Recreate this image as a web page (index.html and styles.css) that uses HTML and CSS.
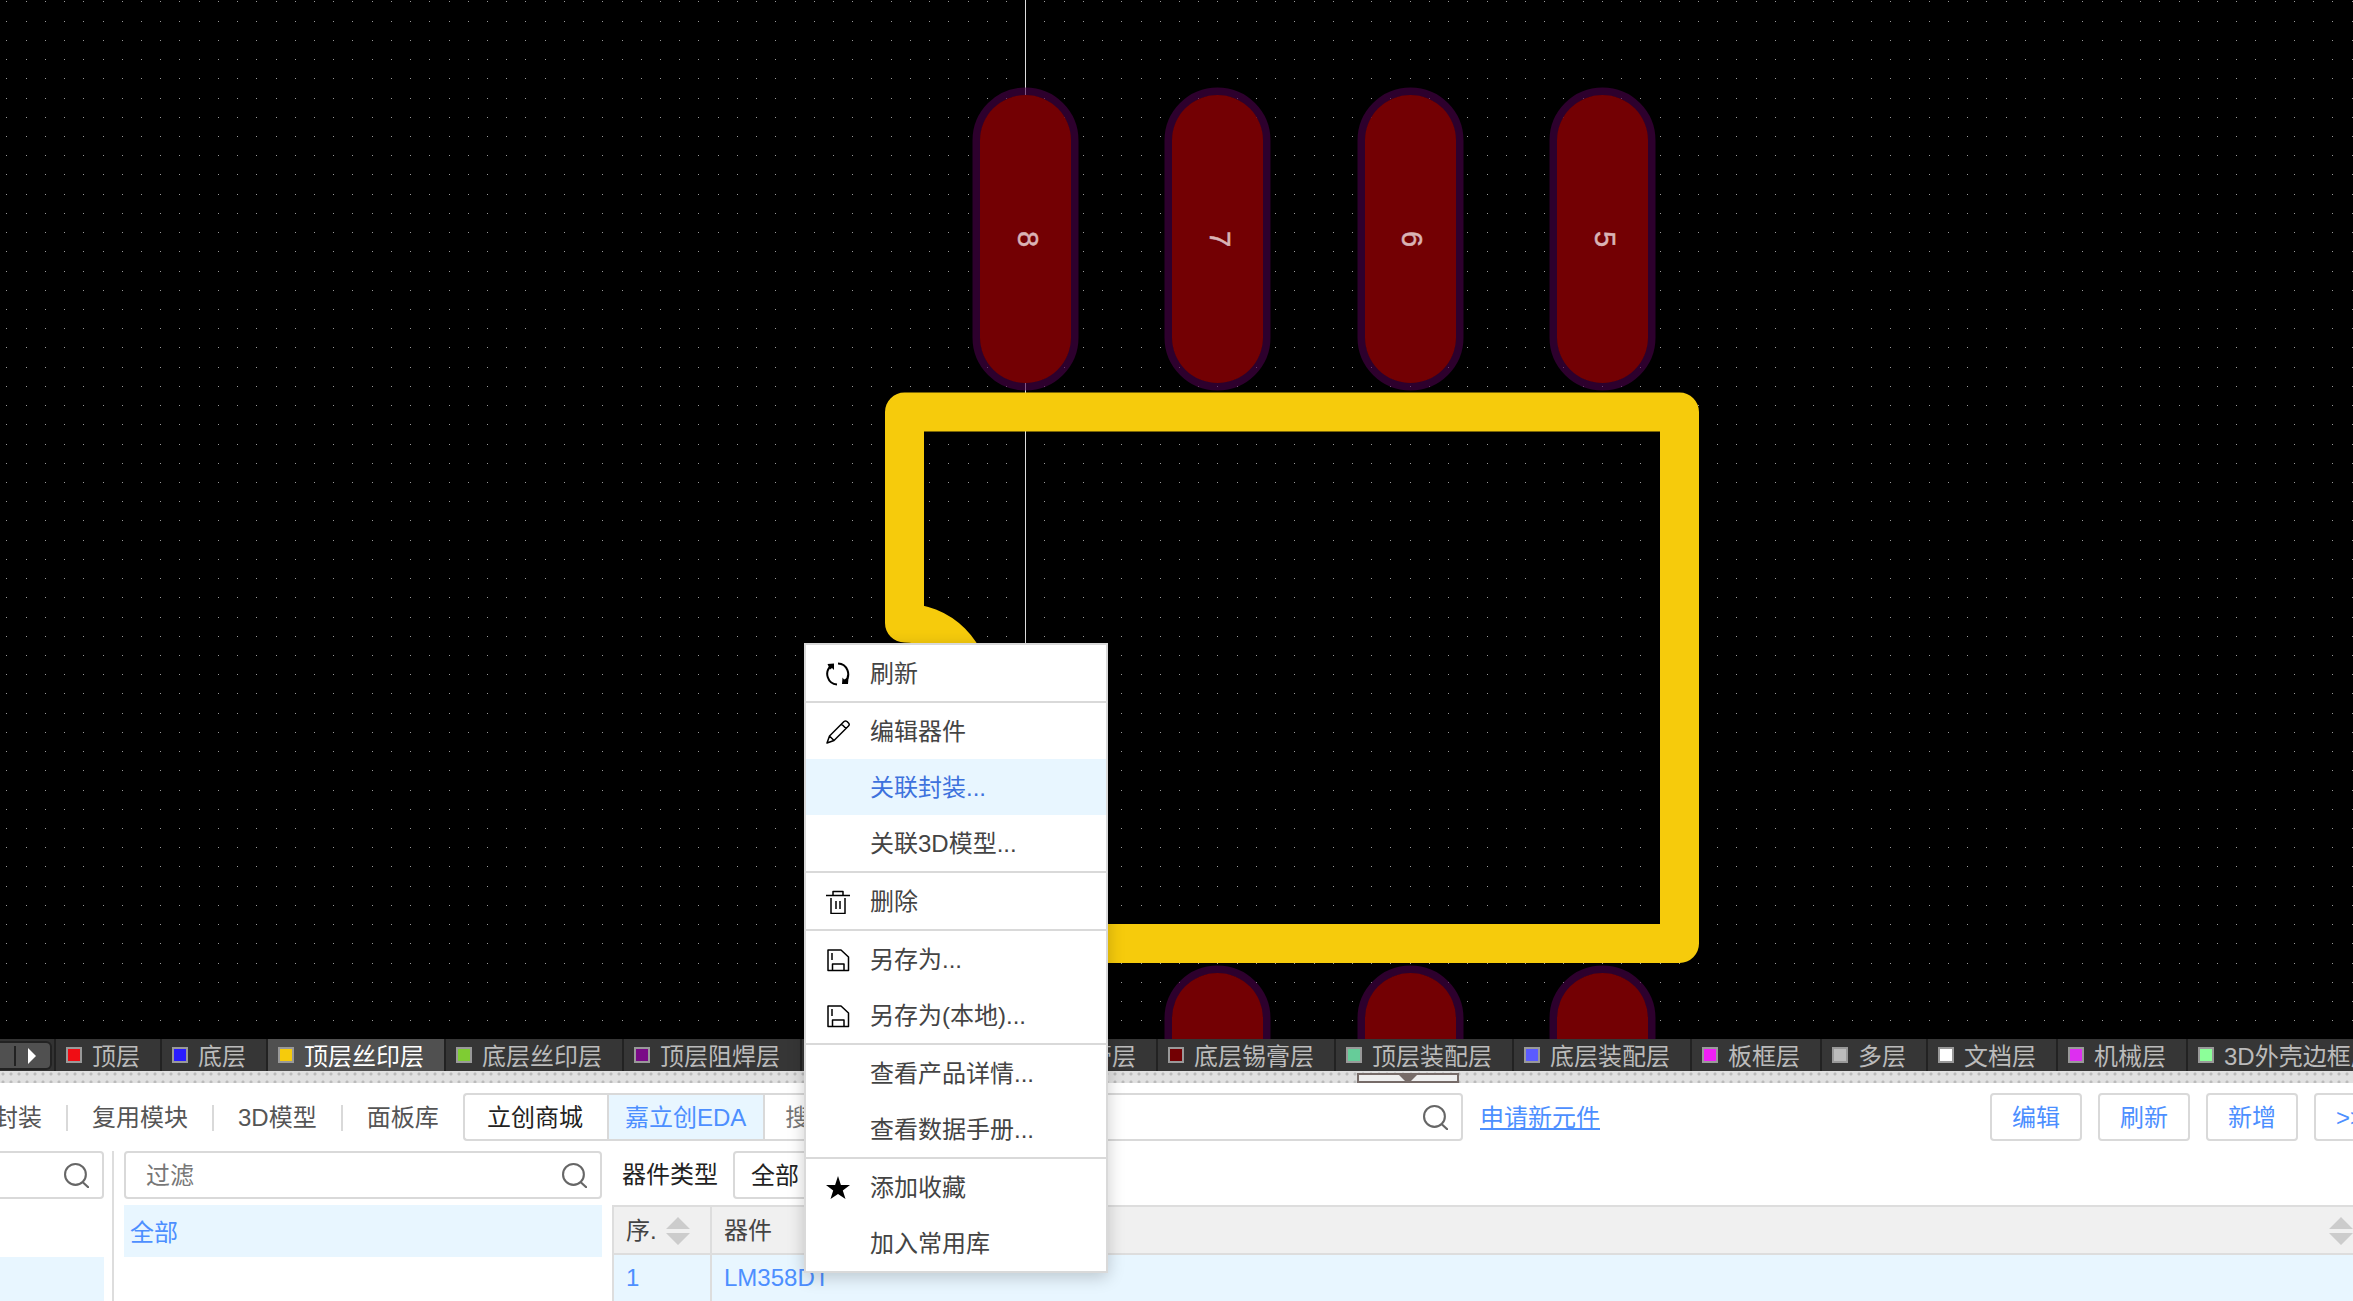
FILE: index.html
```html
<!DOCTYPE html>
<html lang="zh-CN">
<head>
<meta charset="utf-8">
<title>立创EDA</title>
<link rel="stylesheet" href="styles.css">
</head>
<body>
<svg class="defs" aria-hidden="true">
  <symbol id="search" viewBox="0 0 24 24"><circle cx="11" cy="11" r="10"/><path d="M17.500 18L24 24"/></symbol>
  <symbol id="save" viewBox="0 0 24 24"><path d="M2 2h13l7.500 7v13.500H2zM6.500 22v-6h11.500v6M6 5v7"/></symbol>
</svg>
<main class="app">
  <section class="canvas">
    <svg class="board" width="100%" height="100%">
      <defs>
        <pattern id="grid" x="6" y="1" width="173" height="173" patternUnits="userSpaceOnUse">
          <path id="dots" class="dots" d="M0 .5H173"/>
          <use href="#dots" y="20"/><use href="#dots" y="39"/><use href="#dots" y="58"/><use href="#dots" y="77"/>
          <use href="#dots" y="97"/><use href="#dots" y="116"/><use href="#dots" y="135"/><use href="#dots" y="154"/>
        </pattern>
        <g id="pad">
          <rect class="mask" x="-48.500" y="3.500" width="98" height="295" rx="49"/>
          <rect class="copper" x="-45" y="7" width="91" height="288" rx="45.500"/>
        </g>
      </defs>
      <rect width="100%" height="100%" fill="url(#grid)"/>
      <path class="axis" d="M1025.500 0V1040"/>
      <use href="#pad" x="1025" y="88"/><use href="#pad" x="1217" y="88"/><use href="#pad" x="1410" y="88"/><use href="#pad" x="1602" y="88"/>
      <use href="#pad" x="1025" y="966"/><use href="#pad" x="1217" y="966"/><use href="#pad" x="1410" y="966"/><use href="#pad" x="1602" y="966"/>
      <text class="pin" transform="translate(1018 239) rotate(90)">8</text>
      <text class="pin" transform="translate(1210 239) rotate(90)">7</text>
      <text class="pin" transform="translate(1402 239) rotate(90)">6</text>
      <text class="pin" transform="translate(1595 239) rotate(90)">5</text>
      <path class="silk" d="M904.500 755V943.500H1679.500V412H904.500V623A66 66 0 0 1 904.500 755"/>
    </svg>
  </section>

  <nav class="layers">
    <span class="scroller"><button class="prev" aria-label="上一个"></button><button class="next" aria-label="下一个"><svg width="8" height="16"><path d="M0 0L8 8L0 16z"/></svg></button></span>
    <button class="layer"><i class="sw red"></i>顶层</button>
    <button class="layer"><i class="sw blue"></i>底层</button>
    <button class="layer active"><i class="sw yellow"></i>顶层丝印层</button>
    <button class="layer"><i class="sw green"></i>底层丝印层</button>
    <button class="layer"><i class="sw purple"></i>顶层阻焊层</button>
    <button class="layer"><i class="sw violet"></i>底层阻焊层</button>
    <button class="layer"><i class="sw gray"></i>顶层锡膏层</button>
    <button class="layer"><i class="sw maroon"></i>底层锡膏层</button>
    <button class="layer"><i class="sw mint"></i>顶层装配层</button>
    <button class="layer"><i class="sw indigo"></i>底层装配层</button>
    <button class="layer"><i class="sw magenta"></i>板框层</button>
    <button class="layer"><i class="sw silver"></i>多层</button>
    <button class="layer"><i class="sw white"></i>文档层</button>
    <button class="layer"><i class="sw orchid"></i>机械层</button>
    <button class="layer"><i class="sw lime"></i>3D外壳边框层</button>
  </nav>
  <div class="splitter"><button class="collapse" aria-label="收起"><svg width="18" height="9"><path d="M0 0H18L9 9z"/></svg></button></div>

  <section class="library">
    <div class="toolbar">
      <div class="kinds">
        <button class="kind first">封装</button><button class="kind">复用模块</button><button class="kind">3D模型</button><button class="kind">面板库</button>
      </div>
      <div class="searchbar">
        <button class="source">立创商城</button><button class="source chosen">嘉立创EDA</button>
        <label class="field query"><input aria-label="搜索" placeholder="搜索"><svg class="glass"><use href="#search"/></svg></label>
      </div>
      <a class="request" href="#new">申请新元件</a>
      <div class="actions"><button>编辑</button><button>刷新</button><button>新增</button><button class="more">&gt;&gt;</button></div>
    </div>
    <div class="panes">
      <div class="pane tree">
        <label class="field"><input aria-label="分类过滤"><svg class="glass"><use href="#search"/></svg></label>
        <div class="gap"></div><div class="picked"></div>
      </div>
      <div class="pane filter">
        <label class="field"><input aria-label="过滤" placeholder="过滤"><svg class="glass"><use href="#search"/></svg></label>
        <div class="picked">全部</div>
      </div>
      <div class="results">
        <div class="typebar"><label for="type">器件类型</label><select id="type"><option>全部</option></select></div>
        <table>
          <thead><tr><th class="num"><span class="head">序.<svg class="sort" width="24" height="28"><path d="M12 0L24 12H0zM0 16H24L12 28z"/></svg></span></th><th><span class="head">器件<svg class="sort last" width="24" height="28"><path d="M12 0L24 12H0zM0 16H24L12 28z"/></svg></span></th></tr></thead>
          <tbody><tr><td>1</td><td>LM358DT</td></tr></tbody>
        </table>
      </div>
    </div>
  </section>
</main>

<div class="menu" role="menu">
  <button><svg class="icon" viewBox="0 0 24 24"><path class="bold" d="M11 22.500A10.500 10.500 0 0 1 5 4M12 1.500A10.500 10.500 0 0 1 19 19.500"/><path class="solid" d="M1.500 2L8 1.500L8 8L6 6L4 7.500zM16.500 15.500L18 17.500L22.500 15.500L22 22L16 22z"/></svg>刷新</button>
  <hr>
  <button><svg class="icon" viewBox="0 0 24 24"><path d="M1 23l2.500-7L18 1.500q1.500-1 3 0l1.500 1.500q1.500 1.500 0 3L8 20.500zM3.500 16l4.500 4.500M15.500 4l4.500 4.500"/></svg>编辑器件</button>
  <button class="hover"><span class="icon"></span>关联封装...</button>
  <button><span class="icon"></span>关联3D模型...</button>
  <hr>
  <button><svg class="icon" viewBox="0 0 24 24"><path d="M0 5.500h24M7 5V1.500h10V5M5 8v15.500h14V8M10 11v8M14 11v8"/></svg>删除</button>
  <hr>
  <button><svg class="icon"><use href="#save"/></svg>另存为...</button>
  <button><svg class="icon"><use href="#save"/></svg>另存为(本地)...</button>
  <hr>
  <button><span class="icon"></span>查看产品详情...</button>
  <button><span class="icon"></span>查看数据手册...</button>
  <hr>
  <button><svg class="icon" viewBox="0 0 24 24"><path class="solid" d="M12 0l2.900 9H24l-7.200 5.500L19.500 23L12 18L4.500 23l2.700-8.500L0 9h9.100z"/></svg>添加收藏</button>
  <button><span class="icon"></span>加入常用库</button>
</div>
</body>
</html>
```
FILE: styles.css
```css
* { box-sizing: border-box; }
body { margin: 0; }
body, button, input, select {
  font: 400 24px/32px "Liberation Sans", "Noto Sans CJK SC", sans-serif;
  color: #444;
}
button { padding: 0; border: 0; background: none; white-space: nowrap; }
.defs { display: none; }
.app { display: flex; flex-direction: column; height: 100vh; overflow: hidden; background: #fff; }

.canvas { flex: 1; min-height: 0; background: #000; }
.board { display: block; }
.dots { stroke: #999; stroke-width: 1; stroke-dasharray: 1 19 1 18 1 18 1 18 1 19 1 18 1 18 1 18 1 18; shape-rendering: crispEdges; }
.axis { stroke: #ddd; }
.mask { fill: none; stroke: #4b004b; stroke-opacity: .6; stroke-width: 8; }
.copper { fill: #730003; }
.silk { fill: none; stroke: #f6cb0c; stroke-width: 39; stroke-linejoin: round; stroke-linecap: round; }
.pin { fill: #d9b3b5; stroke: #d9b3b5; stroke-width: .5; font-size: 29px; text-anchor: middle; }

.layers { display: flex; flex: none; height: 32px; background: #222; overflow: hidden; }
.layers button { flex: none; }
.scroller { flex: none; display: flex; width: 54px; height: 32px; padding: 2px 2px 1px 0; background: #333; }
.layers .prev, .layers .next { border: 2px solid #222; background: #505050; }
.layers .prev { width: 14px; border-width: 2px 0; }
.layers .next { width: 38px; border-left: 0; border-radius: 0 6px 6px 0; background: linear-gradient(#222, #222) 0 3px / 2px 20px no-repeat #505050; }
.next svg { display: block; margin: 0 auto; fill: #fff; }
.layer { display: flex; align-items: center; height: 32px; margin-left: 2px; padding: 4px 20px 0 10px; background: #363636; color: #bbb; }
.layer.active { background: #505050; color: #fff; }
.sw { width: 16px; height: 16px; margin: 0 10px 4px 0; border: 2px solid #999; }
.red { background: #f00d14; } .blue { background: #2a1cff; } .yellow { background: #f6cb0c; } .green { background: #7fcc33; }
.purple { background: #7a0a87; } .violet { background: #a0f; } .gray { background: #888; } .maroon { background: #730003; }
.mint { background: #66cc99; } .indigo { background: #5b5bff; } .magenta { background: #f01ff5; } .silver { background: #bbb; }
.white { background: #fff; } .orchid { background: #dd2ff0; } .lime { background: #8cff99; }
.layers .layer:first-of-type { margin-left: 2px; }

.splitter { display: flex; flex: none; height: 12px; padding: 2px 0 0 1357px; background: radial-gradient(circle at 3px 3px, #bbb 1px, transparent 2px) 0 0 / 8px 8px #e0e0e0; }
.collapse { width: 102px; height: 10px; border: 2px solid #766b68; background: #eee; overflow: hidden; }
.collapse svg { display: block; margin: 0 auto; fill: #766b68; }

.library { flex: none; height: 218px; overflow: hidden; }
.toolbar { display: flex; align-items: center; height: 68px; }
.kinds { display: flex; width: 463px; padding-top: 2px; }
.kind { height: 26px; padding: 0 24px; border-left: 2px solid #d9d9d9; line-height: 26px; color: #555; }
.kind.first { border: 0; padding-left: 0; margin-left: -6px; }
.searchbar { display: flex; width: 1000px; height: 48px; }
.source { border: 2px solid #d9d9d9; border-right: 0; border-radius: 4px 0 0 4px; padding: 2px 24px 0 22px; color: #222; }
.source.chosen { border-radius: 0; padding: 2px 17px 0 16px; background: #e8f6ff; color: #4d8fff; }
.field { display: flex; align-items: center; height: 48px; border: 2px solid #d9d9d9; border-radius: 4px; padding: 0 13px 0 20px; background: #fff; }
.field input { flex: 1; min-width: 0; padding: 2px 0 0; border: 0; outline: 0; background: none; }
.field input::placeholder { color: #777; opacity: 1; }
.glass { width: 25px; height: 25px; fill: none; stroke: #666; stroke-width: 2; overflow: visible; }
.query { flex: 1; border-radius: 0 4px 4px 0; }
.request { margin-left: 17px; padding-top: 2px; color: #4d8fff; }
.actions { display: flex; gap: 16px; margin-left: auto; margin-right: -33px; }
.actions button { width: 92px; height: 48px; padding-top: 2px; border: 2px solid #d9d9d9; border-radius: 4px; color: #4d8fff; }
.actions .more { width: 72px; }
.panes { display: flex; height: 150px; }
.pane { padding-right: 8px; }
.tree { width: 114px; border-right: 2px solid #ddd; }
.tree .field { margin: 0 0 6px -20px; }
.gap { height: 52px; }
.picked { height: 52px; padding: 2px 6px 0; line-height: 52px; background: #e8f6ff; color: #4d8fff; }
.filter { width: 498px; padding: 0 10px; }
.filter .field { margin-bottom: 6px; }
.results { flex: 1; min-width: 0; }
.typebar { display: flex; align-items: center; height: 54px; padding: 0 0 6px 10px; color: #222; }
.typebar select { appearance: none; width: 260px; height: 48px; margin-left: 15px; padding: 2px 16px 0; border: 2px solid #d9d9d9; border-radius: 4px; background: #fff; color: #222; }
table { width: 100%; table-layout: fixed; border-collapse: collapse; }
th, td { height: 48px; padding: 0 12px; border: 2px solid #ddd; border-right: 0; text-align: left; font-weight: 400; }
th { background: #f0f0f0; padding-top: 2px; }
td { background: #e8f6ff; color: #4d8fff; }
.num { width: 98px; }
.head { display: flex; align-items: center; gap: 9px; }
.sort { flex: none; fill: #ccc; }
.sort.last { margin: 0 -12px 0 auto; }

.menu { position: absolute; left: 804px; top: 643px; width: 304px; border: 2px solid #d9d9d9; background: #fff; box-shadow: 0 4px 16px rgba(0, 0, 0, .2); }
.menu button { display: flex; align-items: center; width: 100%; height: 56px; padding: 1px 0 0 20px; }
.menu hr { height: 2px; margin: 0; border: 0; background: #d9d9d9; }
.menu .hover { background: #e8f6ff; color: #3d72dd; }
.icon { flex: none; width: 24px; height: 24px; margin-right: 20px; fill: none; stroke: #000; stroke-width: 1.500; stroke-linejoin: round; }
.icon .bold { stroke-width: 2; }
.icon .solid { fill: #000; stroke: none; }
```
